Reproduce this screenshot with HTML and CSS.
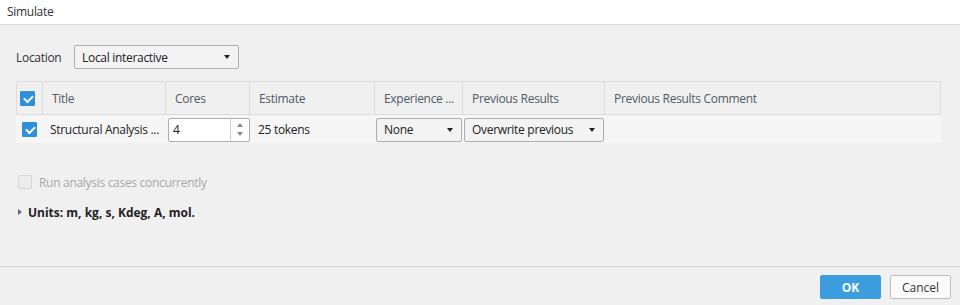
FILE: index.html
```html
<!DOCTYPE html>
<html lang="en">
<head>
    <meta charset="UTF-8">
    <meta name="viewport" content="width=device-width, initial-scale=1.0">
    <title>Simulate</title>
    <link rel="stylesheet" href="styles.css">
</head>
<body>
    <div class="dialog">
        <div class="titlebar">Simulate</div>

        <div class="content">
            <div class="location-row">
                <span class="label">Location</span>
                <div class="select select-location">
                    <span>Local interactive</span>
                    <span class="caret"></span>
                </div>
            </div>

            <div class="grid">
                <div class="row head">
                    <div class="cell c-check"><span class="check on"></span></div>
                    <div class="cell c-title">Title</div>
                    <div class="cell c-cores">Cores</div>
                    <div class="cell c-est">Estimate</div>
                    <div class="cell c-exp">Experience ...</div>
                    <div class="cell c-prev">Previous Results</div>
                    <div class="cell c-comment">Previous Results Comment</div>
                </div>
                <div class="row data">
                    <div class="cell c-check"><span class="check on"></span></div>
                    <div class="cell c-title">Structural Analysis ...</div>
                    <div class="cell c-cores">
                        <div class="spinner">
                            <span class="value">4</span>
                            <span class="arrows">
                                <span class="up"></span>
                                <span class="down"></span>
                            </span>
                        </div>
                    </div>
                    <div class="cell c-est">25 tokens</div>
                    <div class="cell c-exp">
                        <div class="select select-cell">
                            <span>None</span>
                            <span class="caret"></span>
                        </div>
                    </div>
                    <div class="cell c-prev">
                        <div class="select select-cell">
                            <span>Overwrite previous</span>
                            <span class="caret"></span>
                        </div>
                    </div>
                    <div class="cell c-comment"></div>
                </div>
            </div>

            <label class="option disabled">
                <span class="check"></span>
                Run analysis cases concurrently
            </label>

            <div class="units">
                <span class="expander"></span>
                Units: m, kg, s, Kdeg, A, mol.
            </div>
        </div>

        <div class="footer">
            <button class="btn primary">OK</button>
            <button class="btn">Cancel</button>
        </div>
    </div>
</body>
</html>
```

FILE: styles.css
```css
* {
    margin: 0;
    padding: 0;
    box-sizing: border-box;
}

body {
    width: 960px;
    height: 305px;
    background: #f0f0f0;
    font-family: "Open Sans", "Noto Sans", sans-serif;
    font-size: 12px;
    letter-spacing: -0.3px;
    color: #222;
    overflow: hidden;
}

.dialog {
    display: flex;
    flex-direction: column;
    height: 305px;
}

.titlebar {
    height: 25px;
    padding-left: 7px;
    line-height: 23px;
    font-size: 12px;
    color: #333;
    background: #fff;
    border-bottom: 1px solid #dcdcdc;
}

.content {
    flex: 1;
    padding: 20px 19px 0 16px;
}

.location-row {
    display: flex;
    align-items: center;
    height: 24px;
}

.label {
    width: 58px;
    color: #333;
}

.select {
    display: flex;
    align-items: center;
    justify-content: space-between;
    height: 24px;
    padding: 0 8px 0 7px;
    background: #f3f3f3;
    border: 1px solid #adadad;
    border-radius: 2px;
    color: #222;
}

.select-location {
    width: 165px;
}

.caret {
    width: 0;
    height: 0;
    border-left: 3.5px solid transparent;
    border-right: 3.5px solid transparent;
    border-top: 4px solid #222;
}

.grid {
    margin-top: 12px;
    width: 925px;
}

.row {
    display: flex;
}

.row.head {
    height: 34px;
    border-top: 1px solid #dcdcdc;
}

.row.head .cell {
    border-right: 1px solid #dcdcdc;
    border-bottom: 1px solid #dcdcdc;
    color: #4f5b66;
    padding-left: 9px;
}

.row.head .c-check {
    border-left: 1px solid #dcdcdc;
    padding-left: 3px;
}

.row.data {
    height: 28px;
    padding-top: 1px;
    background: #f5f5f5;
}

.row.data .cell {
    padding-left: 7px;
}

.cell {
    display: flex;
    align-items: center;
    white-space: nowrap;
    overflow: hidden;
}

.c-check { width: 27px; }
.c-title { width: 123px; }
.c-cores { width: 84px; }
.c-est { width: 125px; }
.c-exp { width: 88px; }
.c-prev { width: 142px; }
.c-comment { flex: 1; }

.row.data .c-check { padding-left: 6px; }
.row.data .c-cores { padding-left: 2px; }
.row.data .c-exp,
.row.data .c-prev { padding-left: 1px; }
.row.data .c-est { padding-left: 8px; }

.check {
    display: inline-block;
    width: 15px;
    height: 15px;
    border: 1px solid #c9c9c9;
    border-radius: 1px;
    background: #f7f7f7;
    position: relative;
}

.check.on {
    background: #2f8fd8;
    border-color: #2f8fd8;
}

.check.on::after {
    content: "";
    position: absolute;
    left: 3px;
    top: 3px;
    width: 7px;
    height: 4px;
    border-left: 2px solid #fff;
    border-bottom: 2px solid #fff;
    transform: rotate(-45deg);
}

.spinner {
    display: flex;
    align-items: stretch;
    width: 82px;
    height: 24px;
    background: #fff;
    border: 1px solid #adadad;
    border-radius: 2px;
}

.spinner .value {
    flex: 1;
    display: flex;
    align-items: center;
    padding-left: 4px;
}

.spinner .arrows {
    width: 19px;
    border-left: 1px solid #d4d4d4;
    display: flex;
    flex-direction: column;
    align-items: center;
    justify-content: center;
    gap: 5px;
}

.spinner .up {
    border-left: 3px solid transparent;
    border-right: 3px solid transparent;
    border-bottom: 4px solid #888;
}

.spinner .down {
    border-left: 3px solid transparent;
    border-right: 3px solid transparent;
    border-top: 4px solid #888;
}

.select-cell {
    width: 100%;
    margin-right: 1px;
    background: #f3f3f3;
}

.option {
    display: flex;
    align-items: center;
    gap: 7px;
    margin-top: 31px;
    padding-left: 2px;
    height: 16px;
}

.option.disabled {
    color: #a8a8a8;
}

.option .check {
    width: 14px;
    height: 14px;
    background: #ececec;
    border-color: #d8d8d8;
}

.units {
    display: flex;
    align-items: center;
    gap: 6px;
    margin-top: 14px;
    height: 16px;
    padding-left: 2px;
    font-weight: bold;
    letter-spacing: 0;
    color: #222;
}

.expander {
    width: 0;
    height: 0;
    border-top: 3.5px solid transparent;
    border-bottom: 3.5px solid transparent;
    border-left: 4px solid #666;
}

.footer {
    display: flex;
    justify-content: flex-end;
    gap: 9px;
    height: 39px;
    padding: 8px 9px 0 0;
    border-top: 1px solid #d4d4d4;
}

.btn {
    width: 61px;
    height: 24px;
    font-family: inherit;
    font-size: 12px;
    letter-spacing: 0;
    border-radius: 2px;
    border: 1px solid #bdbdbd;
    background: #fafafa;
    color: #333;
}

.btn.primary {
    background: #3b9ddd;
    border-color: #3b9ddd;
    color: #fff;
    font-weight: bold;
}
```
